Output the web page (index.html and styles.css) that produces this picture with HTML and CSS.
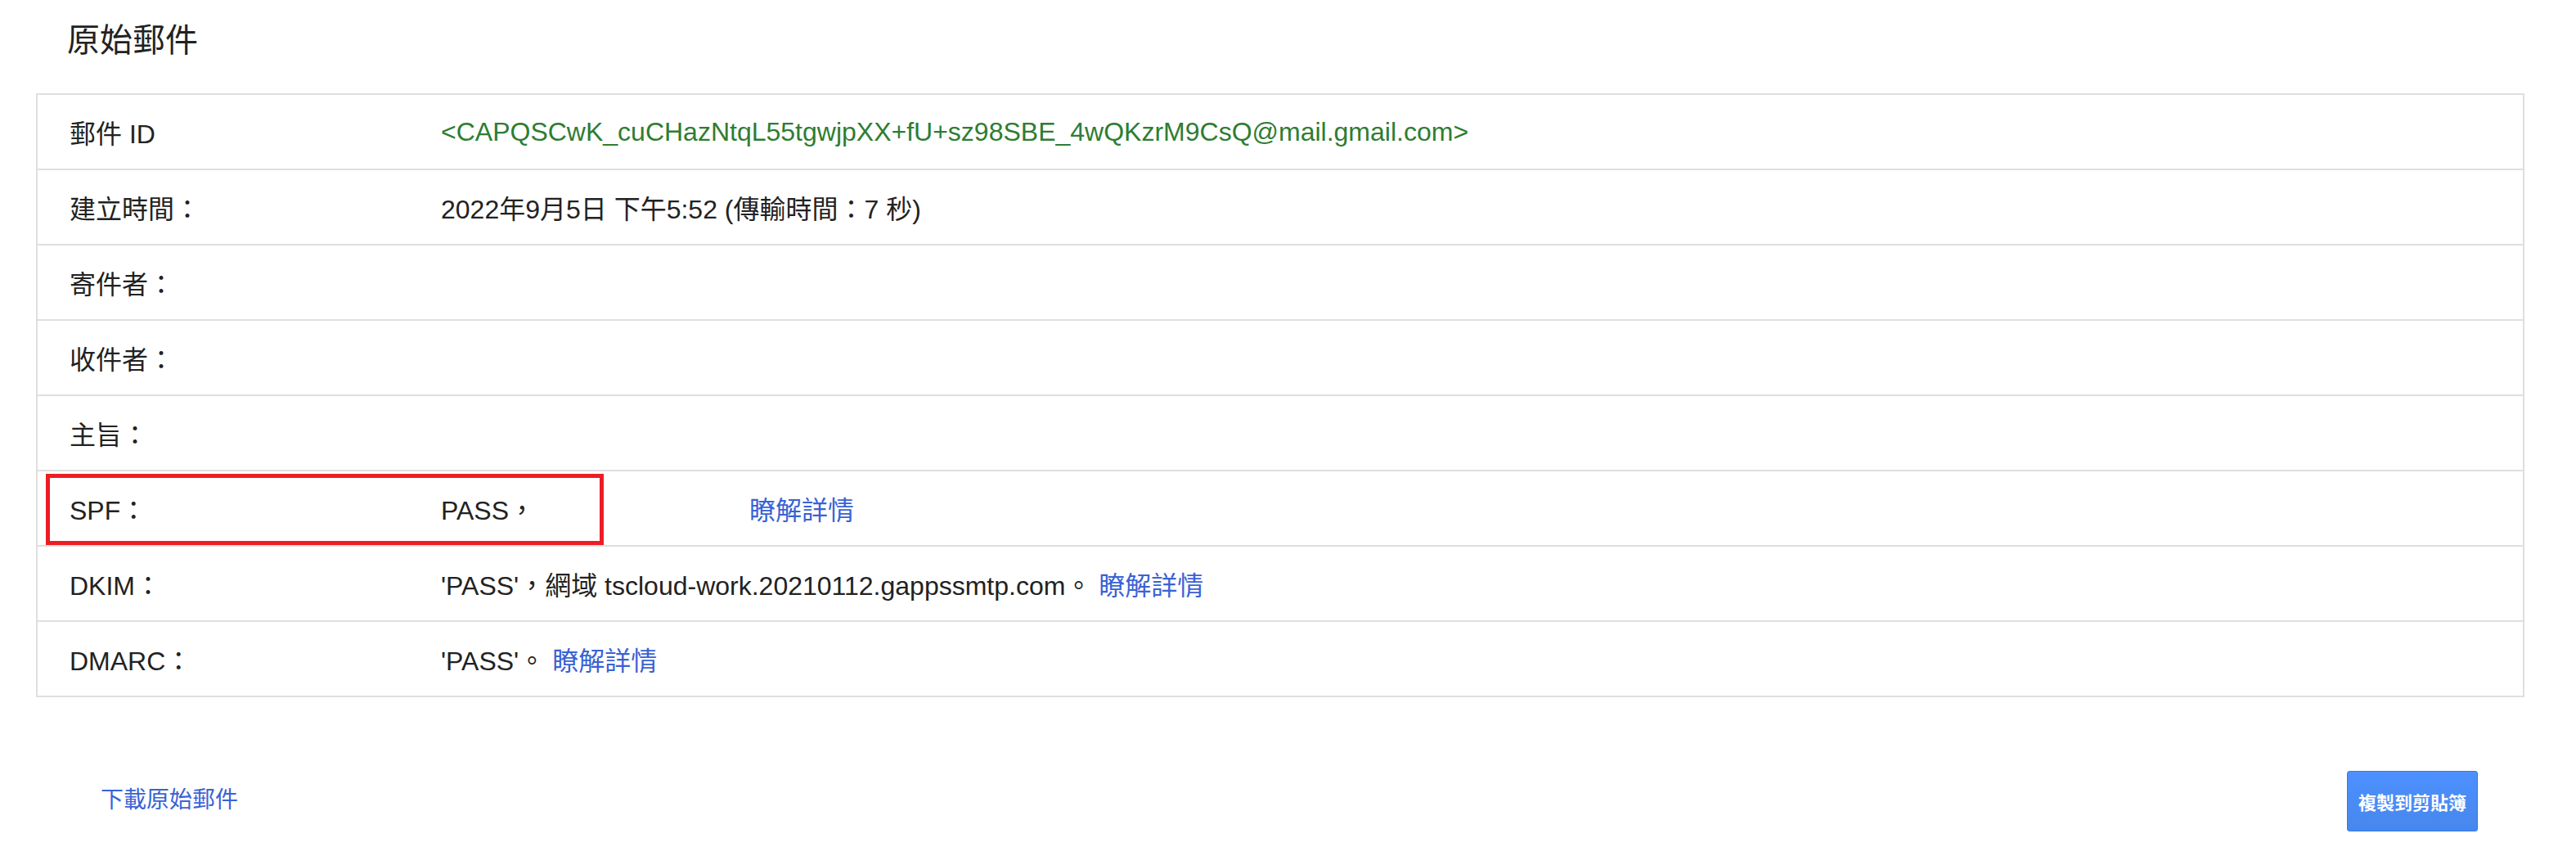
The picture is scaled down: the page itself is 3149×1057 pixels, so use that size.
FILE: index.html
```html
<!DOCTYPE html>
<html lang="zh-Hant">
<head>
<meta charset="utf-8">
<title>原始郵件</title>
<link rel="stylesheet" href="styles.css">
</head>
<body>
<h1 class="title">原始郵件</h1>
<div class="table">
  <div class="row"><div class="label">郵件 ID</div><div class="value msgid">&lt;CAPQSCwK_cuCHazNtqL55tgwjpXX+fU+sz98SBE_4wQKzrM9CsQ@mail.gmail.com&gt;</div></div>
  <div class="row"><div class="label">建立時間：</div><div class="value">2022年9月5日 下午5:52 (傳輸時間：7 秒)</div></div>
  <div class="row"><div class="label">寄件者：</div><div class="value"></div></div>
  <div class="row"><div class="label">收件者：</div><div class="value"></div></div>
  <div class="row"><div class="label">主旨：</div><div class="value"></div></div>
  <div class="row row-mark"><div class="label">SPF：</div><div class="value">PASS，<a class="link spf-link" href="#">瞭解詳情</a></div><div class="mark"></div></div>
  <div class="row"><div class="label">DKIM：</div><div class="value">'PASS'，網域 tscloud-work.20210112.gappssmtp.com。 <a class="link" href="#">瞭解詳情</a></div></div>
  <div class="row"><div class="label">DMARC：</div><div class="value">'PASS'。 <a class="link" href="#">瞭解詳情</a></div></div>
</div>
<div class="footer">
  <a class="link download" href="#">下載原始郵件</a>
  <button class="copy-btn" type="button">複製到剪貼簿</button>
</div>
</body>
</html>
```
FILE: styles.css
```css
html, body {
  margin: 0;
  padding: 0;
  background: #ffffff;
}
body {
  font-family: "Liberation Sans", Arial, "Noto Sans CJK TC", sans-serif;
  color: #222222;
}
.title {
  margin: 0;
  padding: 25px 0 0 82px;
  font-size: 40px;
  line-height: 48px;
  font-weight: normal;
  color: #222222;
}
.table {
  margin: 41px 63px 0 44px;
  border: 2px solid #dfdfdf;
  border-bottom: 0;
}
.row {
  display: grid;
  grid-template-columns: 493px 1fr;
  align-items: center;
  height: 90px;
  border-bottom: 2px solid #dfdfdf;
  font-size: 32px;
  color: #222222;
}
.label {
  padding-left: 39px;
  white-space: nowrap;
}
.value {
  white-space: nowrap;
}
.msgid {
  color: #2e7d32;
}
.link {
  color: #3a62d4;
  text-decoration: none;
}
.spf-link {
  margin-left: 262px;
}
.row-mark {
  position: relative;
}
.mark {
  position: absolute;
  left: 10px;
  top: 3px;
  width: 682px;
  height: 87px;
  box-sizing: border-box;
  border: 5px solid #ee1c25;
  pointer-events: none;
}
.footer {
  display: flex;
  align-items: center;
  justify-content: space-between;
  margin-top: 90px;
  padding: 0 120px 0 123px;
}
.download {
  font-size: 28px;
  padding-bottom: 8px;
}
.copy-btn {
  width: 160px;
  height: 74px;
  box-sizing: border-box;
  border: 1px solid #3079ed;
  border-radius: 3px;
  background: linear-gradient(#4d90fe, #4787ed);
  color: #ffffff;
  font-family: "Liberation Sans", Arial, "Noto Sans CJK TC", sans-serif;
  font-size: 22px;
  font-weight: bold;
  padding: 0;
  display: flex;
  align-items: center;
  justify-content: center;
}
```
